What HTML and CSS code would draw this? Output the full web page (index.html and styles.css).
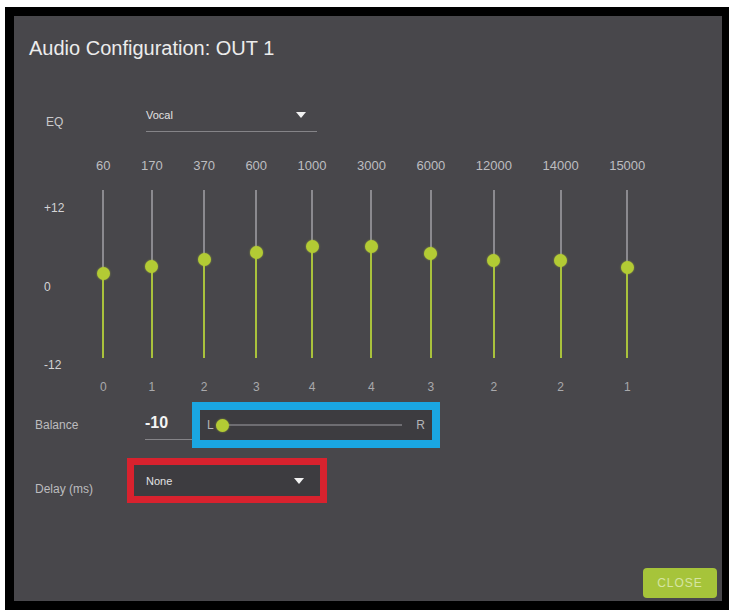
FILE: index.html
```html
<!DOCTYPE html>
<html lang="en">

<head>
    <meta charset="UTF-8">
    <meta name="viewport" content="width=device-width, initial-scale=1.0">
    <title>Audio Configuration</title>
    <link rel="stylesheet" href="styles.css">
</head>

<body>
    <div class="frame">
        <div class="dialog">
            <h1 class="dialog-title">Audio Configuration: OUT 1</h1>

            <!-- Preset -->
            <div class="eq-row">
                <span class="eq-label">EQ</span>
                <div class="select select-preset">
                    <span>Vocal</span>
                    <span class="caret"></span>
                </div>
            </div>

            <!-- Bandes de l'égaliseur -->
            <div class="eq-grid">
                <div class="axis">
                    <span>+12</span>
                    <span>0</span>
                    <span>-12</span>
                </div>
                <div class="bands">
                    <div class="band"><span class="freq">60</span><div class="track" style="--fill:85px"><div class="fill"></div><div class="knob"></div></div><span class="gain">0</span></div>
                    <div class="band"><span class="freq">170</span><div class="track" style="--fill:92px"><div class="fill"></div><div class="knob"></div></div><span class="gain">1</span></div>
                    <div class="band"><span class="freq">370</span><div class="track" style="--fill:99px"><div class="fill"></div><div class="knob"></div></div><span class="gain">2</span></div>
                    <div class="band"><span class="freq">600</span><div class="track" style="--fill:106px"><div class="fill"></div><div class="knob"></div></div><span class="gain">3</span></div>
                    <div class="band"><span class="freq">1000</span><div class="track" style="--fill:112px"><div class="fill"></div><div class="knob"></div></div><span class="gain">4</span></div>
                    <div class="band"><span class="freq">3000</span><div class="track" style="--fill:112px"><div class="fill"></div><div class="knob"></div></div><span class="gain">4</span></div>
                    <div class="band"><span class="freq">6000</span><div class="track" style="--fill:105px"><div class="fill"></div><div class="knob"></div></div><span class="gain">3</span></div>
                    <div class="band"><span class="freq">12000</span><div class="track" style="--fill:98px"><div class="fill"></div><div class="knob"></div></div><span class="gain">2</span></div>
                    <div class="band"><span class="freq">14000</span><div class="track" style="--fill:98px"><div class="fill"></div><div class="knob"></div></div><span class="gain">2</span></div>
                    <div class="band"><span class="freq">15000</span><div class="track" style="--fill:91px"><div class="fill"></div><div class="knob"></div></div><span class="gain">1</span></div>
                </div>
            </div>

            <!-- Balance -->
            <div class="field-row">
                <span class="field-label balance-label">Balance</span>
                <span class="balance-value">-10</span>
                <div class="mark mark-blue">
                    <div class="balance-slider">
                        <span>L</span>
                        <div class="balance-track">
                            <div class="knob balance-knob"></div>
                        </div>
                        <span>R</span>
                    </div>
                </div>
            </div>

            <!-- Délai -->
            <div class="field-row delay-row">
                <span class="field-label delay-label">Delay (ms)</span>
                <div class="mark mark-red">
                    <div class="select select-delay">
                        <span>None</span>
                        <span class="caret"></span>
                    </div>
                </div>
            </div>

            <button class="close-btn">CLOSE</button>
        </div>
    </div>
</body>

</html>
```

FILE: styles.css
```css
* {
    margin: 0;
    padding: 0;
    box-sizing: border-box;
    font-family: "Liberation Sans", Arial, sans-serif;
}

body {
    background-color: #fff;
}

.frame {
    width: 724px;
    height: 603px;
    margin: 7px 0 0 5px;
    padding: 9px 7px 9px 9px;
    background-color: #000;
}

.dialog {
    display: flex;
    flex-direction: column;
    height: 100%;
    padding: 20px 5px 3px 15px;
    background-color: #48474b;
    color: #c9c9cb;
}

.dialog-title {
    font-size: 20px;
    font-weight: normal;
    line-height: 24px;
    color: #ececec;
}

/* Ligne EQ */
.eq-row {
    display: flex;
    margin-top: 47px;
}

.eq-label {
    width: 117px;
    padding: 7px 0 0 17px;
    font-size: 12px;
    line-height: 16px;
}

.select {
    display: flex;
    align-items: center;
    justify-content: space-between;
    font-size: 11px;
    color: #e2e2e2;
}

.select-preset {
    width: 171px;
    height: 25px;
    padding: 0 11px 8px 0;
    border-bottom: 1px solid #858488;
}

.caret {
    width: 0;
    height: 0;
    border-left: 5px solid transparent;
    border-right: 5px solid transparent;
    border-top: 6px solid #f2f2f2;
}

/* Égaliseur */
.eq-grid {
    display: flex;
    margin: 26px 0 0 15px;
}

.axis {
    display: flex;
    flex-direction: column;
    justify-content: space-between;
    width: 52px;
    height: 173px;
    margin-top: 42px;
    font-size: 12px;
    line-height: 16px;
    color: #d4d4d6;
}

.bands {
    display: flex;
    gap: 30.5px;
}

.band {
    display: flex;
    flex-direction: column;
    align-items: center;
}

.freq,
.gain {
    font-size: 13px;
    line-height: 16px;
    color: #bdbdc0;
}

.gain {
    margin-top: 21px;
    font-size: 12px;
    color: #a9a9ac;
}

.track {
    position: relative;
    width: 2px;
    height: 168px;
    margin-top: 16px;
    background-color: #8b8a8f;
}

.fill {
    position: absolute;
    left: 0;
    bottom: 0;
    width: 2px;
    height: var(--fill);
    background-color: #a9c23c;
}

.knob {
    position: absolute;
    left: -5.5px;
    bottom: calc(var(--fill) - 6.5px);
    width: 13px;
    height: 13px;
    border-radius: 50%;
    background-color: #b3cb34;
    box-shadow: 0 0 2px rgba(190, 215, 60, 0.6);
}

/* Balance et délai */
.field-row {
    display: flex;
    align-items: center;
    margin-top: 7px;
}

.delay-row {
    margin-top: 10px;
}

.field-label {
    padding-left: 6px;
    font-size: 12px;
    color: #bcbcbf;
}

.balance-label {
    width: 116px;
}

.delay-label {
    width: 98px;
    padding-top: 17px;
}

.balance-value {
    width: 47px;
    padding: 3px 0 6px;
    border-bottom: 1px solid #858488;
    font-size: 16px;
    font-weight: bold;
    line-height: 20px;
    color: #f4f4f4;
}

.mark {
    border: 8px solid;
    background-color: #3d3c40;
}

.mark-blue {
    width: 248px;
    height: 46px;
    border-color: #1aa6e2;
}

.mark-red {
    width: 200px;
    height: 45px;
    border-width: 7px;
    border-color: #d8222e;
}

.balance-slider {
    display: flex;
    align-items: center;
    height: 100%;
    padding: 0 7px 0 7px;
    font-size: 12px;
    color: #b4b4b7;
}

.balance-track {
    position: relative;
    flex: 1;
    height: 2px;
    margin: 0 14px 0 2px;
    background-color: #6e6d72;
}

.balance-knob {
    left: 0;
    bottom: -5.5px;
}

.select-delay {
    height: 100%;
    padding: 0 16px 0 12px;
}

.close-btn {
    align-self: flex-end;
    margin-top: auto;
    width: 74px;
    height: 30px;
    border: none;
    border-radius: 4px;
    background-color: #a6c43a;
    color: #d5e5a2;
    font-size: 12px;
    letter-spacing: 1px;
}
```
